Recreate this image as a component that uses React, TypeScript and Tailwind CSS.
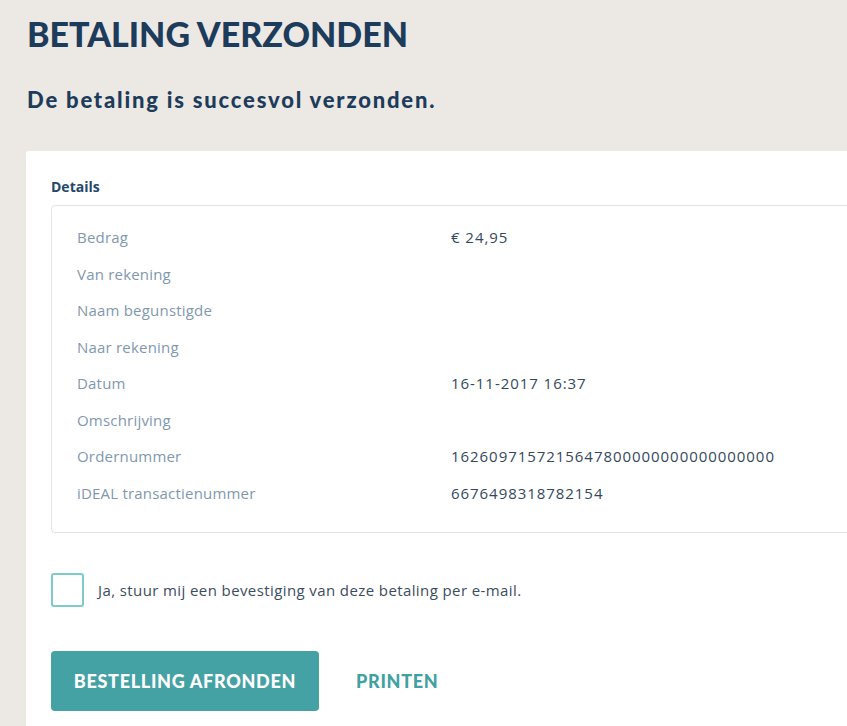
const rows: { label: string; value: string }[] = [
  { label: 'Bedrag', value: '€ 24,95' },
  { label: 'Van rekening', value: '' },
  { label: 'Naam begunstigde', value: '' },
  { label: 'Naar rekening', value: '' },
  { label: 'Datum', value: '16-11-2017 16:37' },
  { label: 'Omschrijving', value: '' },
  { label: 'Ordernummer', value: '1626097157215647800000000000000000' },
  { label: 'iDEAL transactienummer', value: '6676498318782154' },
]

export default function App() {
  return (
    <div className="h-[726px] w-[847px] overflow-hidden bg-[#ece9e4] font-['Open_Sans',sans-serif]">
      <div className="pl-[27px] pt-[14px]">
        <h1 className="font-['Lato',sans-serif] text-[34px] font-black leading-[40px] text-[#1d3b5a]">
          BETALING VERZONDEN
        </h1>
        <p className="mt-[33px] font-['Lato',sans-serif] text-[22px] font-black leading-[26px] tracking-[1.8px] text-[#1d3b5a]">
          De betaling is succesvol verzonden.
        </p>
      </div>

      {/* witte kaart loopt door buiten beeld */}
      <div className="ml-[26px] mt-[38px] w-[900px] rounded-[3px] bg-white pb-[20px] pl-[25px] pt-[26px]">
        <h2 className="text-[14px] font-bold leading-[20px] text-[#23486a]">Details</h2>
        <div className="mt-[8px] rounded-[4px] border border-[#e2e4e4] pb-[21px] pt-[13px]">
          {rows.map((row) => (
            <div key={row.label} className="flex h-[36.5px] items-center text-[15px]">
              <span className="w-[399px] pl-[25px] tracking-[0.2px] text-[#7f98ad]">{row.label}</span>
              <span className="tracking-[0.95px] text-[#34485c]">{row.value}</span>
            </div>
          ))}
        </div>

        <label className="mt-[40px] flex items-center gap-[14px]">
          <span className="h-[34px] w-[33px] rounded-[3px] border-2 border-[#7ccaca]" />
          <span className="text-[15px] tracking-[0.4px] text-[#3d4c5e]">
            Ja, stuur mij een bevestiging van deze betaling per e-mail.
          </span>
        </label>

        <div className="mt-[44px] flex items-center gap-[37px]">
          <button className="h-[60px] w-[268px] rounded-[4px] bg-[#45a2a4] font-['Lato',sans-serif] text-[18px] font-black tracking-[0.7px] text-white">
            BESTELLING AFRONDEN
          </button>
          <span className="font-['Lato',sans-serif] text-[18px] font-black tracking-[0.7px] text-[#3fa1a2]">
            PRINTEN
          </span>
        </div>
      </div>
    </div>
  )
}
